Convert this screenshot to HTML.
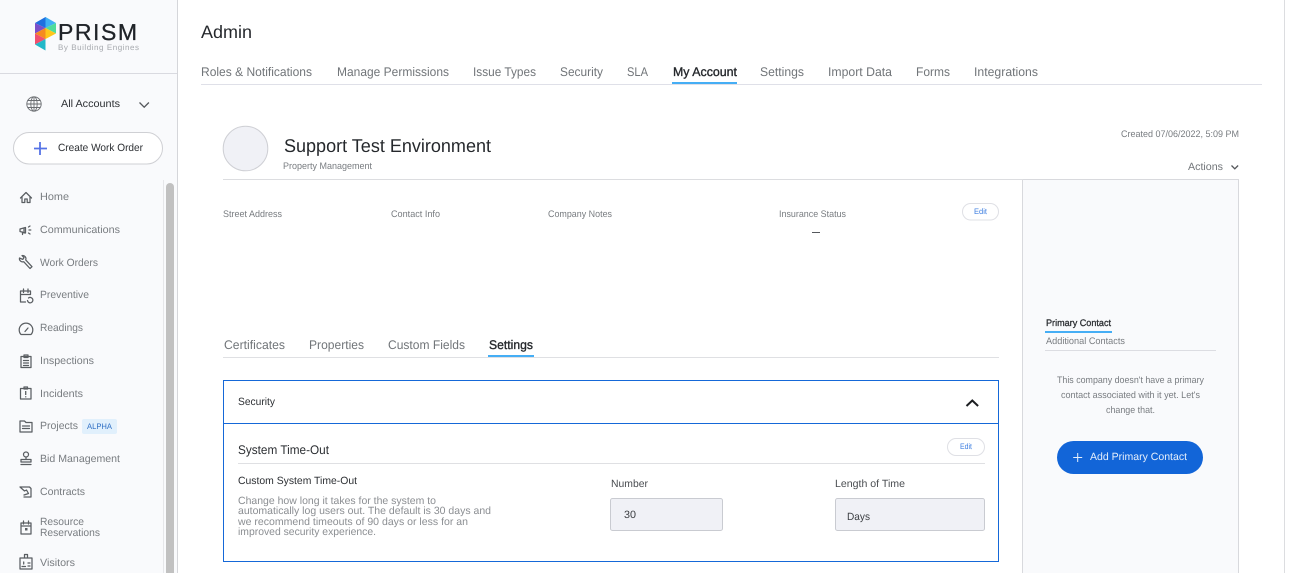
<!DOCTYPE html>
<html lang="en"><head><meta charset="utf-8"><title>Admin - My Account</title>
<style>
html,body{margin:0;padding:0;background:#fff;width:1289px;height:573px;overflow:hidden}
svg{display:block}
text{font-family:"Liberation Sans",Arial,sans-serif;white-space:pre;text-rendering:geometricPrecision}
.n{font-size:10.5px;fill:#787c80}
.t{font-size:12.5px;fill:#717579}
.s{font-size:9.5px;fill:#787c80}
.d{font-size:10.5px;fill:#8b8e92}
.k{fill:#2c2f33}
.e{font-size:8px;fill:#3f7fe0}
.i{fill:none;stroke:#5a5e62;stroke-width:1.25;stroke-linecap:round;stroke-linejoin:round}
</style></head><body>
<svg width="1289" height="573" viewBox="0 0 1289 573" xmlns="http://www.w3.org/2000/svg">
<rect width="1289" height="573" fill="#fff"/>

<!-- sidebar -->
<rect x="0" y="0" width="177" height="573" fill="#f9fafc"/>
<rect x="177" y="0" width="1" height="573" fill="#d5d6da"/>
<rect x="0" y="73" width="177" height="1" fill="#d9dae0"/>
<rect x="163" y="180" width="1" height="393" fill="#e6e7ea"/>
<rect x="166" y="183" width="8" height="395" rx="4" fill="#c1c1c1"/>

<!-- logo -->
<polygon points="45.500,17 35,23 45.500,28" fill="#1e6fe0"/>
<polygon points="45.500,17 56,23 45.500,28" fill="#3fb0f5"/>
<polygon points="35,23 45.500,28 35,33.500" fill="#7b4fc9"/>
<polygon points="56,23 45.500,28 56,33.500" fill="#4fdc9a"/>
<polygon points="35,33.500 45.500,28 45.500,39" fill="#f58a1f"/>
<polygon points="45.500,28 56,33.500 45.500,39" fill="#ffc61a"/>
<polygon points="35,33.500 45.500,39 35,44.500" fill="#f0506e"/>
<polygon points="35,44.500 45.500,39 45.500,50.500" fill="#22b8c8"/>
<text x="58" y="40" font-size="23" fill="#1f2328" stroke="#1f2328" stroke-width="0.3" textLength="79" lengthAdjust="spacing">PRISM</text>
<text x="58" y="50" font-size="8" fill="#a6a9ae" textLength="81" lengthAdjust="spacing">By Building Engines</text>

<!-- account -->
<g fill="none" stroke="#6a6d71" stroke-width="0.9">
<circle cx="34" cy="104" r="7.2"/><ellipse cx="34" cy="104" rx="3.2" ry="7.2"/>
<path d="M34 96.8v14.4M26.8 104h14.4M27.800 100.500h12.400M27.800 107.500h12.400"/>
</g>
<text x="61" y="107" font-size="10.5" class="k" textLength="59" lengthAdjust="spacingAndGlyphs">All Accounts</text>
<path d="M139.500 102.500l4.700 4.700 4.700-4.700" fill="none" stroke="#55585c" stroke-width="1.3"/>
<rect x="13.500" y="132.500" width="149" height="31.500" rx="15.700" fill="#fff" stroke="#cfd0d4"/>
<path d="M40 142v13M34 148.500h13" stroke="#5573e6" stroke-width="1.800" fill="none"/>
<text x="58" y="151" font-size="10.5" class="k" textLength="85" lengthAdjust="spacingAndGlyphs">Create Work Order</text>

<!-- nav -->
<text class="n" x="40" y="200" textLength="29" lengthAdjust="spacingAndGlyphs">Home</text>
<text class="n" x="40" y="233" textLength="80" lengthAdjust="spacingAndGlyphs">Communications</text>
<text class="n" x="40" y="266" textLength="58" lengthAdjust="spacingAndGlyphs">Work Orders</text>
<text class="n" x="40" y="298" textLength="49" lengthAdjust="spacingAndGlyphs">Preventive</text>
<text class="n" x="40" y="331" textLength="43" lengthAdjust="spacingAndGlyphs">Readings</text>
<text class="n" x="40" y="364" textLength="54" lengthAdjust="spacingAndGlyphs">Inspections</text>
<text class="n" x="40" y="397" textLength="43" lengthAdjust="spacingAndGlyphs">Incidents</text>
<text class="n" x="40" y="429" textLength="38" lengthAdjust="spacingAndGlyphs">Projects</text>
<rect x="82" y="419" width="35" height="15" rx="2" fill="#e1f0fc"/>
<text x="87" y="429" font-size="8" fill="#2f6fc4" textLength="25" lengthAdjust="spacingAndGlyphs">ALPHA</text>
<text class="n" x="40" y="462" textLength="80" lengthAdjust="spacingAndGlyphs">Bid Management</text>
<text class="n" x="40" y="495" textLength="45" lengthAdjust="spacingAndGlyphs">Contracts</text>
<text class="n" x="40" y="525" textLength="44" lengthAdjust="spacingAndGlyphs">Resource</text>
<text class="n" x="40" y="536" textLength="60" lengthAdjust="spacingAndGlyphs">Reservations</text>
<text class="n" x="40" y="566" textLength="35" lengthAdjust="spacingAndGlyphs">Visitors</text>

<!-- nav icons -->
<path class="i" d="M20.500 198l5.500-5.500 5.500 5.500M22 197v5.500h2.800v-3.500h2.400v3.500H30V197"/>
<path class="i" d="M20 229l5.500-1.500v5.500l-5.500-1.500zM22.500 232v2.500M24 228v5M28.500 227l1.500-1M29 230h1.800M28.500 233l1.500 1"/>
<path class="i" d="M19.500 258a3.200 3.200 0 0 0 4.200 3.700l6.300 6.800 2-1.800-6.300-6.800a3.200 3.200 0 0 0-3.700-4.300l2 2-1.200 1.800z"/>
<path class="i" d="M20.500 291h10v3.500M20.500 291v11h5M20.500 294.500h10M23.500 289v3.500M28 289v3.500"/><path class="i" d="M27.500 300.500a2.700 2.700 0 1 0 1-2.500"/>
<path class="i" d="M21 334.500a6.800 6.800 0 1 1 10 0zM25 331.500l3-3.500"/>
<path class="i" d="M21 356.500h10v11H21zM24 355h4v2.500h-4zM23.500 360.500h5M23.500 363h5M23.500 365.500h5"/>
<path class="i" d="M20.500 388.500h10.500v10.500H20.500zM24 387h3.500v2H24z"/><path d="M25.700 391v4M25.700 396.200v1.200" stroke="#5a5e62" stroke-width="1.300" fill="none"/>
<path class="i" d="M20 421h4.500l1.500 1.500h6V432H20zM22.500 426h7M22.500 428.500h7"/>
<circle class="i" cx="26" cy="454.500" r="2.500"/><path class="i" d="M26 457v2M21 459.500h10v2.500H21zM21 464.500h10"/>
<path class="i" d="M20 487h9.500l1.500 1.500V497h-7M20 487l4.500 4 2-1 2 3.500-4.500 1.500"/>
<path class="i" d="M21 523h10v11H21zM21 526h10M23.500 521v3M28.500 521v3"/><rect x="25" y="528" width="2.500" height="2.500" fill="#5a5e62"/>
<path class="i" d="M20 558h12v11H20zM24.500 558v-3.500h3v3.500M22 566.500h3.500M23.700 562v2M28 563h2M28 566h2"/>

<!-- page header -->
<text x="201" y="38" font-size="18" fill="#25282c" textLength="51" lengthAdjust="spacingAndGlyphs">Admin</text>
<text class="t" x="201" y="76" textLength="111" lengthAdjust="spacingAndGlyphs">Roles &amp; Notifications</text>
<text class="t" x="337" y="76" textLength="112" lengthAdjust="spacingAndGlyphs">Manage Permissions</text>
<text class="t" x="473" y="76" textLength="63" lengthAdjust="spacingAndGlyphs">Issue Types</text>
<text class="t" x="560" y="76" textLength="43" lengthAdjust="spacingAndGlyphs">Security</text>
<text class="t" x="627" y="76" textLength="21" lengthAdjust="spacingAndGlyphs">SLA</text>
<text x="673" y="76" font-size="12.500" fill="#25282c" stroke="#25282c" stroke-width="0.35" textLength="64" lengthAdjust="spacingAndGlyphs">My Account</text>
<text class="t" x="760" y="76" textLength="44" lengthAdjust="spacingAndGlyphs">Settings</text>
<text class="t" x="828" y="76" textLength="64" lengthAdjust="spacingAndGlyphs">Import Data</text>
<text class="t" x="916" y="76" textLength="34" lengthAdjust="spacingAndGlyphs">Forms</text>
<text class="t" x="974" y="76" textLength="64" lengthAdjust="spacingAndGlyphs">Integrations</text>
<rect x="201" y="84" width="1061" height="1" fill="#dfe0e8"/>
<rect x="672" y="82" width="65" height="2" fill="#45aef5"/>
<rect x="1284" y="0" width="1" height="573" fill="#dcdde0"/>

<!-- company -->
<circle cx="245.500" cy="148.500" r="22.300" fill="#f0f1f6" stroke="#cfd0d5"/>
<text x="284" y="152" font-size="18.500" fill="#25282c" textLength="207" lengthAdjust="spacingAndGlyphs">Support Test Environment</text>
<text class="s" x="283" y="169" textLength="89" lengthAdjust="spacingAndGlyphs">Property Management</text>
<text class="s" x="1121" y="137" textLength="118" lengthAdjust="spacingAndGlyphs">Created 07/06/2022, 5:09 PM</text>
<text x="1188" y="170" font-size="10.500" fill="#717579" textLength="35" lengthAdjust="spacingAndGlyphs">Actions</text>
<path d="M1231.500 165.500l3.300 3.300 3.300-3.300" fill="none" stroke="#55585c" stroke-width="1.300"/>

<!-- right panel -->
<rect x="1022.500" y="179.500" width="216" height="400" fill="#f9fafc" stroke="#d8d9dd"/>
<rect x="223" y="179" width="800" height="1" fill="#dcdde0"/>

<text class="s" x="223" y="217" textLength="59" lengthAdjust="spacingAndGlyphs">Street Address</text>
<text class="s" x="391" y="217" textLength="49" lengthAdjust="spacingAndGlyphs">Contact Info</text>
<text class="s" x="548" y="217" textLength="64" lengthAdjust="spacingAndGlyphs">Company Notes</text>
<text class="s" x="779" y="217" textLength="67" lengthAdjust="spacingAndGlyphs">Insurance Status</text>
<rect x="812" y="232" width="8" height="1" fill="#55585c"/>
<rect x="962.500" y="203.500" width="36" height="16.500" rx="8.200" fill="#fff" stroke="#dfe0e5"/>
<text class="e" x="974" y="214" textLength="13" lengthAdjust="spacingAndGlyphs">Edit</text>

<!-- sub tabs -->
<text class="t" x="224" y="349" textLength="61" lengthAdjust="spacingAndGlyphs">Certificates</text>
<text class="t" x="309" y="349" textLength="55" lengthAdjust="spacingAndGlyphs">Properties</text>
<text class="t" x="388" y="349" textLength="77" lengthAdjust="spacingAndGlyphs">Custom Fields</text>
<text x="489" y="349" font-size="12.500" fill="#25282c" stroke="#25282c" stroke-width="0.35" textLength="44" lengthAdjust="spacingAndGlyphs">Settings</text>
<rect x="223" y="357" width="776" height="1" fill="#dfe0e3"/>
<rect x="488" y="355" width="46" height="2" fill="#45aef5"/>

<!-- security -->
<rect x="223.500" y="380.500" width="775" height="181" fill="#fff" stroke="#1568d8"/>
<rect x="223" y="423" width="776" height="1" fill="#1568d8"/>
<text x="238" y="405" font-size="10.500" class="k" textLength="37" lengthAdjust="spacingAndGlyphs">Security</text>
<path d="M966.500 406l5.800-5.500 5.800 5.500" fill="none" stroke="#1c1e21" stroke-width="2"/>
<text x="238" y="454" font-size="12.500" class="k" textLength="91" lengthAdjust="spacingAndGlyphs">System Time-Out</text>
<rect x="947.500" y="438.500" width="37" height="17" rx="8.500" fill="#fff" stroke="#dfe0e5"/>
<text class="e" x="960" y="449" textLength="12" lengthAdjust="spacingAndGlyphs">Edit</text>
<rect x="238" y="463" width="747" height="1" fill="#dfe0e3"/>
<text x="238" y="484" font-size="10.500" class="k" textLength="119" lengthAdjust="spacingAndGlyphs">Custom System Time-Out</text>
<text class="d" x="238" y="504" textLength="198" lengthAdjust="spacingAndGlyphs">Change how long it takes for the system to</text>
<text class="d" x="238" y="514" textLength="253" lengthAdjust="spacingAndGlyphs">automatically log users out. The default is 30 days and</text>
<text class="d" x="238" y="525" textLength="230" lengthAdjust="spacingAndGlyphs">we recommend timeouts of 90 days or less for an</text>
<text class="d" x="238" y="535" textLength="138" lengthAdjust="spacingAndGlyphs">improved security experience.</text>
<text x="611" y="487" font-size="10.500" fill="#4a4d51" textLength="37" lengthAdjust="spacingAndGlyphs">Number</text>
<text x="835" y="487" font-size="10.500" fill="#4a4d51" textLength="70" lengthAdjust="spacingAndGlyphs">Length of Time</text>
<rect x="610.500" y="498.500" width="112" height="32" rx="2" fill="#f0f1f6" stroke="#c9cbd1"/>
<text x="624" y="518" font-size="10.500" fill="#3a3d41" textLength="12" lengthAdjust="spacingAndGlyphs">30</text>
<rect x="835.500" y="498.500" width="149" height="32" rx="2" fill="#f0f1f6" stroke="#c9cbd1"/>
<text x="847" y="520" font-size="10.500" fill="#3a3d41" textLength="23" lengthAdjust="spacingAndGlyphs">Days</text>

<!-- contact -->
<text x="1046" y="326" font-size="9.500" fill="#2c2f33" stroke="#2c2f33" stroke-width="0.3" textLength="65" lengthAdjust="spacingAndGlyphs">Primary Contact</text>
<rect x="1045" y="331" width="67" height="2" fill="#45aef5"/>
<text class="s" x="1046" y="344" textLength="79" lengthAdjust="spacingAndGlyphs">Additional Contacts</text>
<rect x="1045" y="350" width="171" height="1" fill="#dcdde2"/>
<text class="s" x="1057" y="383" textLength="147" lengthAdjust="spacingAndGlyphs">This company doesn't have a primary</text>
<text class="s" x="1061" y="398" textLength="139" lengthAdjust="spacingAndGlyphs">contact associated with it yet. Let's</text>
<text class="s" x="1106" y="413" textLength="49" lengthAdjust="spacingAndGlyphs">change that.</text>
<rect x="1057" y="441" width="146" height="33" rx="16.500" fill="#1265d8"/>
<path d="M1077.700 453v9M1073.200 457.500h9" stroke="#e6effb" stroke-width="1" fill="none"/>
<text x="1090" y="460" font-size="10.500" fill="#e6effb" textLength="97" lengthAdjust="spacingAndGlyphs">Add Primary Contact</text>
</svg>
</body></html>
